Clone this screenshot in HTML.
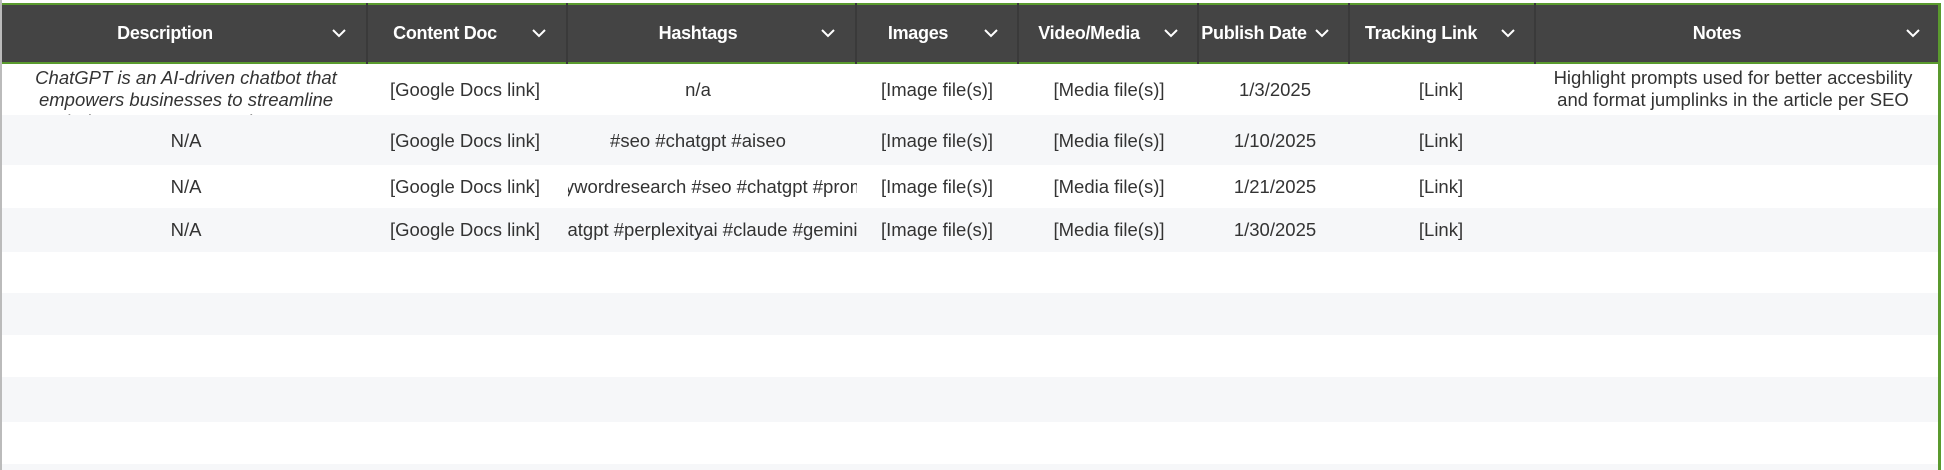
<!DOCTYPE html>
<html><head><meta charset="utf-8"><style>
*{margin:0;padding:0;box-sizing:border-box}
body{width:1944px;height:470px;background:#fff;position:relative;overflow:hidden;font-family:"Liberation Sans",Arial,sans-serif;color:#333}
.hdr{position:absolute;left:0;top:3px;width:1940px;height:61px;background:#444;border-top:2px solid #5a9a2e;border-bottom:2px solid #5a9a2e}
.h{position:absolute;top:0;height:57px;line-height:57px;color:#fff;font-weight:bold;font-size:18px;text-align:center;white-space:nowrap;transform:translateX(-50%);letter-spacing:-0.3px}
.sep{position:absolute;top:-2px;width:2px;height:61px;background:#3a3a3a}
.chev{position:absolute;top:22px;width:16px;height:12px}
.row{position:absolute;left:2px;width:1936px;overflow:hidden}
.g{background:#f6f7f9}
.c{position:absolute;font-size:18.5px;white-space:nowrap;transform:translateX(-50%);text-align:center}
.clip{position:absolute;left:566px;width:289px;overflow:hidden;white-space:nowrap;font-size:18.5px;display:flex;justify-content:center}
.lb{position:absolute;left:0;top:0;width:2px;height:470px;background:#bbb}
.rb{position:absolute;left:1938px;top:3px;width:3px;height:467px;background:#5a9a2e}
</style></head><body>
<div class="hdr">
<div class="sep" style="left:366px"></div><div class="sep" style="left:566px"></div><div class="sep" style="left:855px"></div><div class="sep" style="left:1017px"></div><div class="sep" style="left:1197px"></div><div class="sep" style="left:1348px"></div><div class="sep" style="left:1534px"></div>
<div class="h" style="left:165px">Description</div>
<div class="h" style="left:445px">Content Doc</div>
<div class="h" style="left:698px">Hashtags</div>
<div class="h" style="left:918px">Images</div>
<div class="h" style="left:1089px">Video/Media</div>
<div class="h" style="left:1254px">Publish Date</div>
<div class="h" style="left:1421px">Tracking Link</div>
<div class="h" style="left:1717px">Notes</div>
<svg class="chev" style="left:331px" viewBox="0 0 16 12"><path d="M2 3l6 6 6-6" stroke="#fff" stroke-width="2" fill="none"/></svg>
<svg class="chev" style="left:531px" viewBox="0 0 16 12"><path d="M2 3l6 6 6-6" stroke="#fff" stroke-width="2" fill="none"/></svg>
<svg class="chev" style="left:820px" viewBox="0 0 16 12"><path d="M2 3l6 6 6-6" stroke="#fff" stroke-width="2" fill="none"/></svg>
<svg class="chev" style="left:983px" viewBox="0 0 16 12"><path d="M2 3l6 6 6-6" stroke="#fff" stroke-width="2" fill="none"/></svg>
<svg class="chev" style="left:1163px" viewBox="0 0 16 12"><path d="M2 3l6 6 6-6" stroke="#fff" stroke-width="2" fill="none"/></svg>
<svg class="chev" style="left:1314px" viewBox="0 0 16 12"><path d="M2 3l6 6 6-6" stroke="#fff" stroke-width="2" fill="none"/></svg>
<svg class="chev" style="left:1500px" viewBox="0 0 16 12"><path d="M2 3l6 6 6-6" stroke="#fff" stroke-width="2" fill="none"/></svg>
<svg class="chev" style="left:1905px" viewBox="0 0 16 12"><path d="M2 3l6 6 6-6" stroke="#fff" stroke-width="2" fill="none"/></svg>
</div>
<div class="row" style="top:65px;height:50px">
<div class="c" style="left:184px;top:2px;font-style:italic;line-height:22px;white-space:normal;width:320px">ChatGPT is an AI-driven chatbot that empowers businesses to streamline their processes. Use ChatGPT</div>
<div class="c" style="left:463px;top:14px">[Google Docs link]</div>
<div class="c" style="left:696px;top:14px">n/a</div>
<div class="c" style="left:935px;top:14px">[Image file(s)]</div>
<div class="c" style="left:1107px;top:14px">[Media file(s)]</div>
<div class="c" style="left:1273px;top:14px">1/3/2025</div>
<div class="c" style="left:1439px;top:14px">[Link]</div>
<div class="c" style="left:1731px;top:2px;line-height:22px">Highlight prompts used for better accesbility<br>and format jumplinks in the article per SEO</div>
</div>
<div class="row g" style="top:115px;height:50px">
<div class="c" style="left:184px;top:15px">N/A</div>
<div class="c" style="left:463px;top:15px">[Google Docs link]</div>
<div class="c" style="left:696px;top:15px">#seo #chatgpt #aiseo</div>
<div class="c" style="left:935px;top:15px">[Image file(s)]</div>
<div class="c" style="left:1107px;top:15px">[Media file(s)]</div>
<div class="c" style="left:1273px;top:15px">1/10/2025</div>
<div class="c" style="left:1439px;top:15px">[Link]</div>
</div>
<div class="row" style="top:165px;height:43px">
<div class="c" style="left:184px;top:11px">N/A</div>
<div class="c" style="left:463px;top:11px">[Google Docs link]</div>
<div class="clip" style="top:11px"><span style="flex:none">#keywordresearch #seo #chatgpt #prompts</span></div>
<div class="c" style="left:935px;top:11px">[Image file(s)]</div>
<div class="c" style="left:1107px;top:11px">[Media file(s)]</div>
<div class="c" style="left:1273px;top:11px">1/21/2025</div>
<div class="c" style="left:1439px;top:11px">[Link]</div>
</div>
<div class="row g" style="top:208px;height:44px">
<div class="c" style="left:184px;top:11px">N/A</div>
<div class="c" style="left:463px;top:11px">[Google Docs link]</div>
<div class="clip" style="top:11px"><span style="flex:none">#chatgpt #perplexityai #claude #gemini #ai</span></div>
<div class="c" style="left:935px;top:11px">[Image file(s)]</div>
<div class="c" style="left:1107px;top:11px">[Media file(s)]</div>
<div class="c" style="left:1273px;top:11px">1/30/2025</div>
<div class="c" style="left:1439px;top:11px">[Link]</div>
</div>
<div class="row g" style="top:293px;height:42px"></div>
<div class="row g" style="top:377px;height:45px"></div>
<div class="row g" style="top:464px;height:6px"></div>
<div class="lb"></div><div class="rb"></div>
</body></html>
